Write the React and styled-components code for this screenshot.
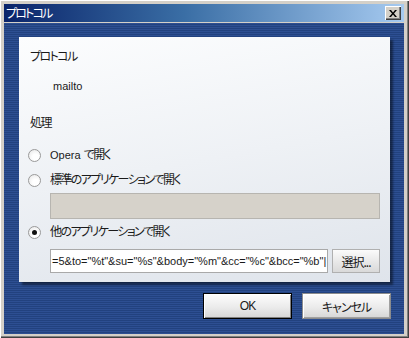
import styled, { createGlobalStyle } from "styled-components";

const GlobalStyle = createGlobalStyle`
  html, body {
    margin: 0;
    padding: 0;
    background: #d4d0c8;
  }
  body {
    font-family: "Liberation Sans", "Noto Sans CJK JP", sans-serif;
    font-size: 11px;
    color: #1a1a1a;
  }
`;

export default function App() {
    return (
        <>
            <GlobalStyle />
            <Ventana>
                <BarraTitulo>
                    <Titulo>プロトコル</Titulo>
                    <BotonCerrar>
                        <svg width="8" height="7" viewBox="0 0 8 7">
                            <path d="M0 0h2l2 2.5L6 0h2L5 3.5 8 7H6L4 4.5 2 7H0l3-3.5z" fill="#000" />
                        </svg>
                    </BotonCerrar>
                </BarraTitulo>
                <Cuerpo>
                    <Panel>
                        <Etiqueta>プロトコル</Etiqueta>
                        <Valor>mailto</Valor>
                        <Etiqueta $arriba={21}>処理</Etiqueta>
                        <FilaRadio $arriba={14}>
                            <Radio />
                            <Etiqueta><Latino>Opera </Latino>で開く</Etiqueta>
                        </FilaRadio>
                        <FilaRadio $arriba={5}>
                            <Radio />
                            <Etiqueta>標準のアプリケーションで開く</Etiqueta>
                        </FilaRadio>
                        <CajaDeshabilitada />
                        <FilaRadio $arriba={3}>
                            <Radio $marcado />
                            <Etiqueta>他のアプリケーションで開く</Etiqueta>
                        </FilaRadio>
                        <FilaEntrada>
                            <Entrada>=5&amp;to="%t"&amp;su="%s"&amp;body="%m"&amp;cc="%c"&amp;bcc="%b"|</Entrada>
                            <BotonChico>選択...</BotonChico>
                        </FilaEntrada>
                    </Panel>
                    <FilaBotones>
                        <Boton $defecto>OK</Boton>
                        <Boton>キャンセル</Boton>
                    </FilaBotones>
                </Cuerpo>
            </Ventana>
        </>
    );
}

const Ventana = styled.div`
box-sizing: border-box;
width: 409px;
height: 338px;
padding: 4px 5px 4px 4px;
display: flex;
flex-direction: column;
background: #d4d0c8;
box-shadow: inset 1px 1px 0 #ffffff, inset -1px -1px 0 #404040, inset -2px -2px 0 #808080;
`

const BarraTitulo = styled.div`
height: 18px;
margin-bottom: 1px;
display: flex;
align-items: center;
justify-content: space-between;
padding: 0 3px 0 2px;
background: linear-gradient(to right, #0a246a 0%, #3a6ea5 45%, #a6caf0 100%);
`

const Titulo = styled.span`
color: #ffffff;
font-family: "Noto Sans CJK JP", sans-serif;
font-size: 12px;
font-feature-settings: "palt";
letter-spacing: -1.8px;
line-height: 18px;
`

const BotonCerrar = styled.div`
box-sizing: border-box;
width: 16px;
height: 14px;
display: flex;
align-items: center;
justify-content: center;
background: #d4d0c8;
box-shadow: inset 1px 1px 0 #ffffff, inset -1px -1px 0 #404040, inset -2px -2px 0 #808080;
`

const Cuerpo = styled.div`
flex: 1;
padding: 14px 13px 0 15px;
display: flex;
flex-direction: column;
background: repeating-linear-gradient(to bottom, #2d4f92 0px, #2d4f92 1px, #22427f 1px, #22427f 2px);
`

const Panel = styled.div`
box-sizing: border-box;
width: 371px;
height: 245px;
padding: 12px 10px 0 11px;
background: linear-gradient(170deg, #fcfdfe 0%, #eef1f5 50%, #dfe4eb 100%);
box-shadow: 3px 3px 2px rgba(0, 0, 0, 0.45);
display: flex;
flex-direction: column;
align-items: flex-start;
`

const Etiqueta = styled.div`
margin-top: ${p => p.$arriba || 0}px;
font-family: "Liberation Sans", "Noto Sans CJK JP", sans-serif;
font-size: 12px;
font-feature-settings: "palt";
letter-spacing: -1.6px;
line-height: 16px;
color: #1a1a1a;
white-space: nowrap;
`

const Latino = styled.span`
font-size: 11px;
letter-spacing: 0;
`

const Valor = styled.div`
margin-top: 13px;
padding-left: 23px;
font-size: 11px;
line-height: 16px;
`

const FilaRadio = styled.div`
margin-top: ${p => p.$arriba}px;
margin-left: -2px;
height: 20px;
display: flex;
align-items: center;
gap: 9px;
`

const Radio = styled.span`
box-sizing: border-box;
width: 13px;
height: 13px;
border-radius: 50%;
border: 1px solid #9a9a9a;
background: radial-gradient(circle at 60% 65%, #ffffff 30%, #e4e4e4 100%);
display: flex;
align-items: center;
justify-content: center;
&::after {
    content: "";
    width: 5px;
    height: 5px;
    border-radius: 50%;
    background: ${p => p.$marcado ? "#111" : "transparent"};
}
`

const CajaDeshabilitada = styled.div`
box-sizing: border-box;
margin: 3px 0 0 20px;
width: 330px;
height: 26px;
background: #d6d2ca;
border: 1px solid #b7b5b0;
`

const FilaEntrada = styled.div`
margin: 7px 0 0 20px;
display: flex;
gap: 4px;
`

const Entrada = styled.div`
box-sizing: border-box;
width: 278px;
height: 24px;
padding-left: 1px;
background: #ffffff;
border: 1px solid #a9a9a9;
font-size: 11px;
line-height: 22px;
white-space: nowrap;
overflow: hidden;
`

const BotonChico = styled.div`
box-sizing: border-box;
width: 48px;
height: 24px;
display: flex;
align-items: center;
justify-content: center;
background: linear-gradient(to bottom, #fbfbfb, #e6e6e6 60%, #d9d9d9);
border: 1px solid #b0b0b0;
font-family: "Noto Sans CJK JP", sans-serif;
font-size: 12px;
font-feature-settings: "palt";
letter-spacing: -1px;
color: #1a1a1a;
`

const FilaBotones = styled.div`
margin-top: 11px;
display: flex;
justify-content: flex-end;
gap: 10px;
`

const Boton = styled.div`
box-sizing: border-box;
width: 89px;
height: 26px;
display: flex;
align-items: center;
justify-content: center;
background: linear-gradient(to bottom, #fdfdfd, #ebebeb 55%, #d6d6d6);
border: 1px solid ${p => p.$defecto ? "#000000" : "#8c8c8c"};
box-shadow: ${p => p.$defecto ? "inset 1px 1px 0 #ffffff, inset -1px -1px 0 #808080" : "inset 1px 1px 0 #ffffff, inset -1px -1px 0 #a0a0a0"};
font-family: "Liberation Sans", "Noto Sans CJK JP", sans-serif;
font-size: 12px;
font-feature-settings: "palt";
letter-spacing: -1px;
color: #1a1a1a;
`
